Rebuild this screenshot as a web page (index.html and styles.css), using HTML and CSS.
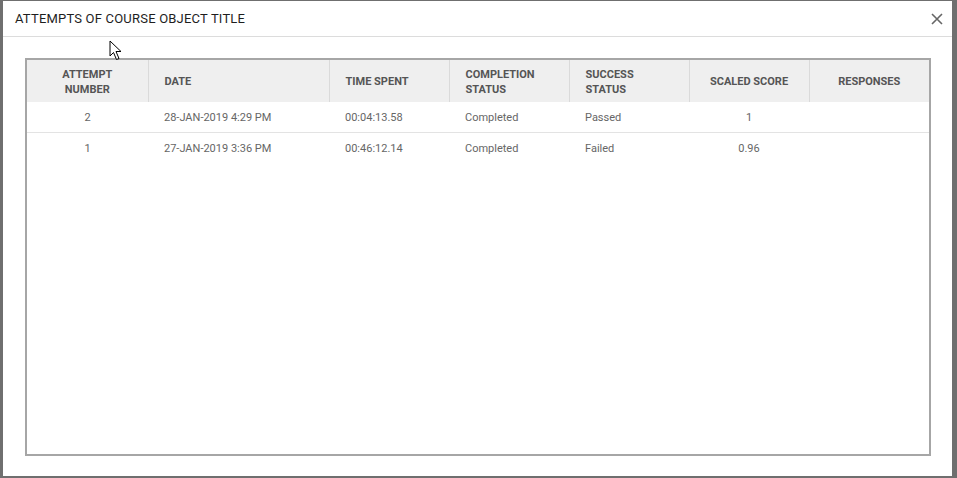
FILE: index.html
```html
<!DOCTYPE html>
<html lang="en">
<head>
  <meta charset="UTF-8">
  <title>Attempts</title>
  <link rel="stylesheet" href="styles.css">
</head>
<body>
  <div class="dialog">
    <!-- Header -->
    <div class="dialog-header">
      <span class="dialog-title">ATTEMPTS OF COURSE OBJECT TITLE</span>
      <button class="close-btn" aria-label="Close">
        <svg width="12" height="12" viewBox="0 0 12 12">
          <path d="M1 1 L11 11 M11 1 L1 11" stroke="#666" stroke-width="1.6" fill="none"/>
        </svg>
      </button>
    </div>

    <!-- Attempts table -->
    <div class="dialog-body">
      <div class="table-box">
        <table class="attempts">
          <thead>
            <tr>
              <th class="center col-num">ATTEMPT<br>NUMBER</th>
              <th class="col-date">DATE</th>
              <th class="col-std">TIME SPENT</th>
              <th class="col-std">COMPLETION<br>STATUS</th>
              <th class="col-std">SUCCESS<br>STATUS</th>
              <th class="center col-std">SCALED SCORE</th>
              <th class="center col-last">RESPONSES</th>
            </tr>
          </thead>
          <tbody>
            <tr>
              <td class="center">2</td>
              <td>28-JAN-2019 4:29 PM</td>
              <td>00:04:13.58</td>
              <td>Completed</td>
              <td>Passed</td>
              <td class="center">1</td>
              <td></td>
            </tr>
            <tr>
              <td class="center">1</td>
              <td>27-JAN-2019 3:36 PM</td>
              <td>00:46:12.14</td>
              <td>Completed</td>
              <td>Failed</td>
              <td class="center">0.96</td>
              <td></td>
            </tr>
          </tbody>
        </table>
      </div>
    </div>
  </div>

  <!-- mouse pointer from the capture -->
  <svg class="pointer" width="14" height="22" viewBox="0 0 14 22">
    <path d="M1 1 L1 16 L4.5 12.5 L7.5 19.5 L10 18.5 L7 11.5 L12 11.5 Z" fill="#fff" stroke="#000" stroke-width="1"/>
  </svg>
</body>
</html>
```

FILE: styles.css
```css
* {
  box-sizing: border-box;
}

html, body {
  margin: 0;
  padding: 0;
  height: 100%;
  overflow: hidden;
}

body {
  background-color: #6f6f6f;
  font-family: Roboto, "Liberation Sans", Arial, sans-serif;
  padding: 1px 5px 2px 3px;
}

.dialog {
  display: flex;
  flex-direction: column;
  height: 100%;
  background: #fff;
}

.dialog-header {
  display: flex;
  align-items: center;
  justify-content: space-between;
  height: 36px;
  padding: 0 7px 0 12px;
  border-bottom: 1px solid #dcdcdc;
}

.dialog-title {
  font-size: 13px;
  color: #1e1e1e;
  letter-spacing: 0.2px;
}

.close-btn {
  display: flex;
  align-items: center;
  justify-content: center;
  width: 16px;
  height: 16px;
  padding: 0;
  border: none;
  background: transparent;
  cursor: pointer;
}

.dialog-body {
  flex: 1;
  display: flex;
  padding: 21px 21px 20px 22px;
}

.table-box {
  flex: 1;
  border: 2px solid #a6a6a6;
  background: #fff;
}

.attempts {
  width: 100%;
  border-collapse: collapse;
  table-layout: fixed;
}

.attempts th {
  height: 42px;
  background: #efefef;
  color: #555;
  font-size: 11px;
  font-weight: 700;
  line-height: 15px;
  text-align: left;
  padding: 1px 16px 0;
  border-right: 1px solid #dadada;
}

.attempts th:last-child {
  border-right: none;
}

.attempts td {
  height: 30px;
  color: #666;
  font-size: 11px;
  padding: 2px 16px 0;
  border-bottom: 1px solid #e3e3e3;
}

.attempts tbody tr:last-child td {
  border-bottom: none;
}

.attempts .center {
  text-align: center;
}

.col-num { width: 121px; }
.col-date { width: 181px; }
.col-std { width: 120px; }

.pointer {
  position: absolute;
  left: 109px;
  top: 40px;
}
```
